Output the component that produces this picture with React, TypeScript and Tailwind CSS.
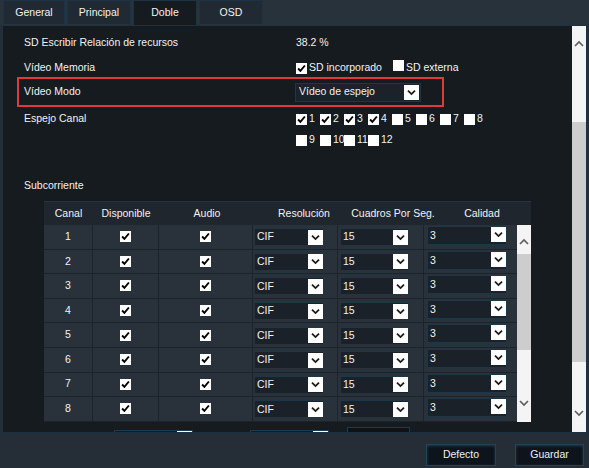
import React from "react";

type Tab = { label: string; w: string; active?: boolean };

const tabs: Tab[] = [
  { label: "General", w: "w-[62px]" },
  { label: "Principal", w: "w-[64px]" },
  { label: "Doble", w: "w-[64px]", active: true },
  { label: "OSD", w: "w-[64px]" },
];

const rows = [1, 2, 3, 4, 5, 6, 7, 8];

const Tick = () => (
  <svg width="11" height="11" viewBox="0 0 11 11">
    <path d="M2.1 5.5 4.4 7.9 8.9 2.5" fill="none" stroke="#000" strokeWidth="1.9" />
  </svg>
);

const Box = ({ on }: { on?: boolean }) => (
  <span className="inline-flex w-[11px] h-[11px] shrink-0 bg-white items-center justify-center">
    {on && <Tick />}
  </span>
);

const DropBtn = () => (
  <span className="flex w-[15px] h-[15px] shrink-0 bg-white items-center justify-center">
    <svg width="11" height="11" viewBox="0 0 11 11">
      <path d="M2 3.6 5.5 7.1 9 3.6" fill="none" stroke="#1b1b1b" strokeWidth="1.8" />
    </svg>
  </span>
);

const Arrow = ({ up }: { up?: boolean }) => (
  <svg width="12" height="12" viewBox="0 0 12 12">
    <path
      d={up ? "M2 8 6 4 10 8" : "M2 4 6 8 10 4"}
      fill="none"
      stroke="#5e5e5e"
      strokeWidth="1.7"
    />
  </svg>
);

// a checkbox with label
const Opt = ({ on, label }: { on?: boolean; label: string }) => (
  <span className="flex items-center gap-[2px] w-[24px] shrink-0">
    <Box on={on} />
    <span>{label}</span>
  </span>
);

export default function App() {
  return (
    <div className="w-[589px] h-[468px] bg-[#252e37] flex flex-col overflow-hidden whitespace-nowrap font-['Liberation_Sans',Arial,sans-serif] text-[10.5px] text-[#f2f2f2]">
      {/* tabs */}
      <div className="flex h-[25px] shrink-0 bg-[#28323b] pl-[3px] gap-[2px]">
        {tabs.map((t) => (
          <div
            key={t.label}
            className={`flex items-center justify-center border-x border-t border-[#1c3345] ${t.w} ${
              t.active ? "h-[25px] bg-[#161b20]" : "h-[24px] bg-[#212a32]"
            }`}
          >
            {t.label}
          </div>
        ))}
      </div>

      {/* main panel */}
      <div className="mx-[2px] h-[408px] shrink-0 border border-[#1b3244] bg-[#161b20] flex">
        <div className="flex-1 min-w-0 overflow-hidden pl-[14px] pt-[7px]">
          <div className="flex items-center h-[20px] pl-[7px]">
            <div className="w-[272px]">SD Escribir Relación de recursos</div>
            <div>38.2 %</div>
          </div>

          <div className="flex items-center h-[18px] mt-[6px] pl-[7px]">
            <div className="w-[272px]">Vídeo Memoria</div>
            <div className="flex items-center">
              <Box on />
              <span className="ml-[2px]">SD incorporado</span>
              <span className="ml-[11px]">
                <Box />
              </span>
              <span className="ml-[2px]">SD externa</span>
            </div>
          </div>

          <div className="flex items-center h-[30px] w-[427px] border-2 border-[#e0393a] pl-[5px]">
            <div className="w-[271px]">Vídeo Modo</div>
            <div className="flex items-center justify-between w-[126px] h-[19px] bg-[#1b2229] border border-[#1d3648] pl-[3px] pr-[1px]">
              <span>Vídeo de espejo</span>
              <DropBtn />
            </div>
          </div>

          <div className="flex mt-[3px] pl-[7px]">
            <div className="w-[272px] h-[18px] flex items-center">Espejo Canal</div>
            <div className="flex flex-col gap-[3px]">
              <div className="flex items-center h-[18px]">
                <Opt on label="1" />
                <Opt on label="2" />
                <Opt on label="3" />
                <Opt on label="4" />
                <Opt label="5" />
                <Opt label="6" />
                <Opt label="7" />
                <Opt label="8" />
              </div>
              <div className="flex items-center h-[18px]">
                <Opt label="9" />
                <Opt label="10" />
                <Opt label="11" />
                <Opt label="12" />
              </div>
            </div>
          </div>

          <div className="flex items-center h-[18px] mt-[28px] pl-[7px]">Subcorriente</div>

          {/* sub stream table */}
          <div className="ml-[27px] mt-[6px] w-[487px]">
            <div className="flex h-[24px] bg-[#1f262d] border-t border-[#263542]">
              <div className="w-[49px] flex items-center justify-center">Canal</div>
              <div className="w-[66px] flex items-center justify-center">Disponible</div>
              <div className="w-[96px] flex items-center justify-center">Audio</div>
              <div className="w-[98px] flex items-center justify-center">Resolución</div>
              <div className="w-[80px] flex items-center justify-center">Cuadros Por Seg.</div>
              <div className="w-[98px] flex items-center justify-center">Calidad</div>
            </div>
            <div className="flex">
              <div className="w-[473px]">
                {rows.map((n) => (
                  <div key={n} className="flex h-[24.6px] bg-[#29323b] border-b border-[#1c232a]">
                    <div className="w-[49px] flex items-center justify-center border-r border-[#1c232a]">{n}</div>
                    <div className="w-[66px] flex items-center justify-center border-r border-[#1c232a]">
                      <Box on />
                    </div>
                    <div className="w-[94px] flex items-center justify-center border-r border-[#1c232a]">
                      <Box on />
                    </div>
                    <div className="w-[85px] flex items-center pl-[2px] border-r border-[#1c232a]">
                      <div className="flex items-center justify-between w-[68px] h-[17px] bg-[#1a2128] border-t border-[#1d3648] pl-[2px]">
                        <span>CIF</span>
                        <DropBtn />
                      </div>
                    </div>
                    <div className="w-[86px] flex items-center pl-[3px] border-r border-[#1c232a]">
                      <div className="flex items-center justify-between w-[67px] h-[17px] bg-[#1a2128] border-t border-[#1d3648] pl-[2px]">
                        <span>15</span>
                        <DropBtn />
                      </div>
                    </div>
                    <div className="w-[93px] flex items-start pl-[3px] pt-[1px]">
                      <div className="flex items-start justify-between w-[80px] h-[19px] bg-[#1a2128] border border-[#1d3648] pl-[2px]">
                        <span className="mt-[1px]">3</span>
                        <DropBtn />
                      </div>
                    </div>
                  </div>
                ))}
              </div>
              <div className="w-[14px] h-[196.8px] bg-[#f4f4f4] flex flex-col">
                <div className="h-[29px] flex justify-center pt-[11px]">
                  <Arrow up />
                </div>
                <div className="h-[96px] bg-[#cdcdcd]" />
                <div className="flex-1" />
                <div className="h-[38px] flex items-center justify-center">
                  <Arrow />
                </div>
              </div>
            </div>
          </div>

          {/* next section, clipped by the panel */}
          <div className="flex items-start mt-[5px]">
            <div className="ml-[97px] mt-[3px] w-[79px] h-[12px] border-x border-t border-[#1d3a4f] flex justify-end">
              <span className="w-[15px] h-[12px] bg-white" />
            </div>
            <div className="ml-[57px] mt-[3px] w-[79px] h-[12px] border-x border-t border-[#1d3a4f] flex justify-end">
              <span className="w-[15px] h-[12px] bg-white" />
            </div>
            <div className="ml-[18px] w-[63px] h-[20px] bg-[#0b1218] border border-[#1d3a50]" />
          </div>
        </div>

        {/* outer scrollbar */}
        <div className="w-[14px] bg-[#f4f4f4] flex flex-col">
          <div className="h-[96px] flex justify-center pt-[12px]">
            <Arrow up />
          </div>
          <div className="h-[240px] bg-[#cdcdcd]" />
          <div className="flex-1" />
          <div className="h-[38px] flex items-center justify-center">
            <Arrow />
          </div>
        </div>
      </div>

      {/* footer */}
      <div className="flex-1 flex justify-end items-start pt-[11px] pr-[5px] gap-[19px]">
        <button className="w-[70px] h-[22px] bg-[#0d141b] border border-[#24425a] shadow-[inset_0_1px_3px_rgba(80,130,170,0.35)] text-[#f0f0f0]">
          Defecto
        </button>
        <button className="w-[69px] h-[22px] bg-[#0d141b] border border-[#24425a] shadow-[inset_0_1px_3px_rgba(80,130,170,0.35)] text-[#f0f0f0]">
          Guardar
        </button>
      </div>
    </div>
  );
}
